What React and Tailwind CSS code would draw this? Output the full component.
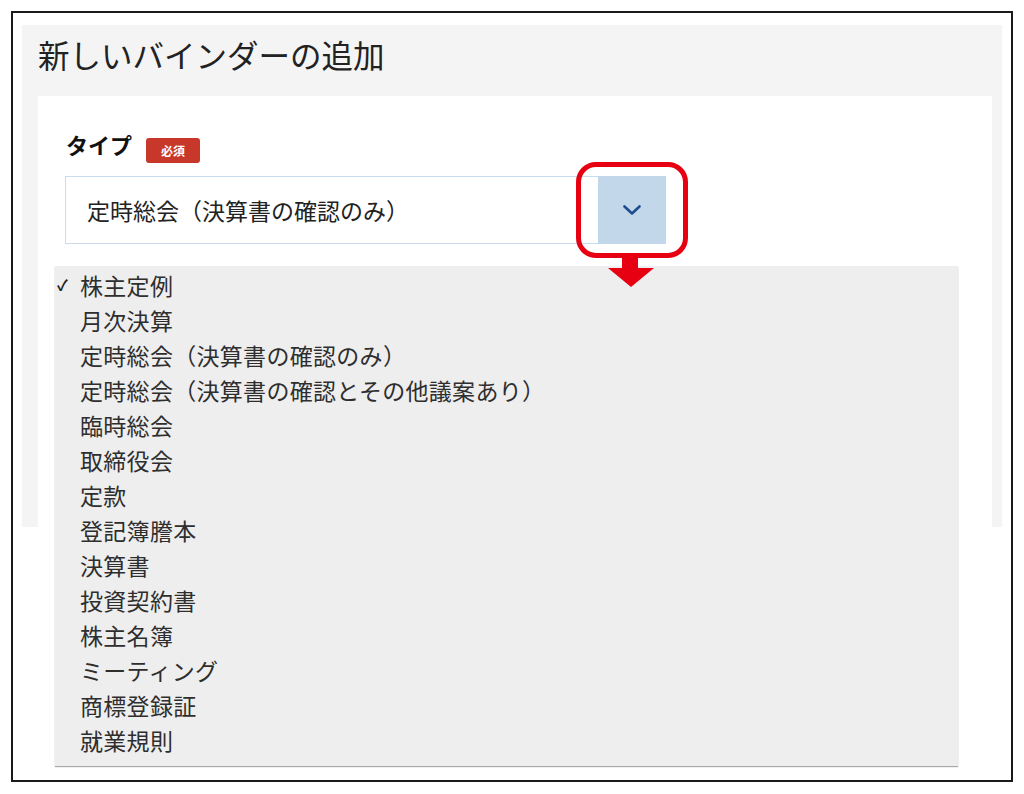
import { useState } from "react";

const types = [
  "株主定例",
  "月次決算",
  "定時総会（決算書の確認のみ）",
  "定時総会（決算書の確認とその他議案あり）",
  "臨時総会",
  "取締役会",
  "定款",
  "登記簿謄本",
  "決算書",
  "投資契約書",
  "株主名簿",
  "ミーティング",
  "商標登録証",
  "就業規則",
];

const App = () => {
  const [selected, setSelected] = useState("定時総会（決算書の確認のみ）");

  return (
    <div className="min-h-[794px] bg-white pt-[11px] pl-[11px] font-['Noto_Sans_CJK_JP','Noto_Sans',sans-serif]">
      <div className="relative w-[1002px] h-[771px] border-2 border-[#1a1a1a]">
        {/* panel */}
        <div className="ml-[9px] mt-[12px] w-[980px] h-[502px] bg-[#f4f4f4] pl-[16px] pr-[10px] flex flex-col">
          <div className="h-[71px] pt-[13px] text-[31.5px] leading-[32px] text-[#222]">新しいバインダーの追加</div>
          <div className="flex-1 bg-white pl-[27px] pt-[36px]">
            <div className="flex items-start gap-[14px] pl-px">
              <span className="text-[22px] leading-[24px] font-bold text-[#111]">タイプ</span>
              <span className="mt-[6px] w-[54px] h-[25px] rounded-[3px] bg-[#c8382a] text-white text-[12px] font-bold flex items-center justify-center">
                必須
              </span>
            </div>
            <div className="mt-[13px] flex w-[601px] h-[68px]">
              <div className="flex-1 border border-r-0 border-[#c9dcef] flex items-center pl-[21px] text-[23px] text-[#222]">
                {selected}
              </div>
              <div className="w-[68px] bg-[#c3d7eb] flex items-center justify-center">
                <svg width="18" height="10" viewBox="0 0 18 10" fill="none">
                  <path d="M1.5 1.5 L9 8.5 L16.5 1.5" stroke="#1f4e8c" strokeWidth="2.6" strokeLinecap="round" strokeLinejoin="round" />
                </svg>
              </div>
            </div>
          </div>
        </div>

        {/* open menu */}
        <div className="absolute left-[42px] top-[253px] w-[903px] h-[500px] bg-[#efeeee] shadow-[0_1px_1px_#a8a8a8] pt-[2px]">
          {types.map((t, i) => (
            <div
              key={t}
              onClick={() => setSelected(t)}
              className="flex items-center h-[35px] text-[23px] tracking-[0.3px] text-[#2e2e2e] cursor-default"
            >
              <span className="w-[25px] pl-[2px] text-[15px] font-bold text-[#222]">{i === 0 ? "✓" : ""}</span>
              <span>{t}</span>
            </div>
          ))}
        </div>

        {/* annotation */}
        <div className="absolute left-[563px] top-[149px] w-[112px] h-[96px] border-[5px] border-[#e60012] rounded-[20px]" />
        <svg className="absolute left-[595px] top-[242px]" width="46" height="33" viewBox="0 0 46 33">
          <rect x="14" y="0" width="16" height="14" fill="#e60012" />
          <polygon points="0,13 46,13 23,32" fill="#e60012" />
        </svg>
      </div>
    </div>
  );
};

export default App;
